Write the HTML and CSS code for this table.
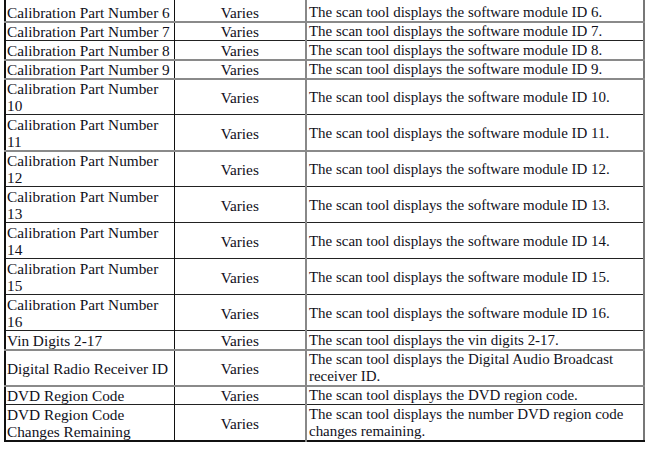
FILE: index.html
```html
<!DOCTYPE html>
<html>
<head>
<meta charset="utf-8">
<link rel="stylesheet" href="styles.css">
</head>
<body>
<table class="data">
<colgroup><col class="c1"><col class="c2"><col class="c3"></colgroup>
<tbody>
<tr class="first"><td>Calibration Part Number 6</td><td class="mid">Varies</td><td class="desc">The scan tool displays the software module ID 6.</td></tr>
<tr class="g"><td>Calibration Part Number 7</td><td class="mid">Varies</td><td class="desc">The scan tool displays the software module ID 7.</td></tr>
<tr><td>Calibration Part Number 8</td><td class="mid">Varies</td><td class="desc">The scan tool displays the software module ID 8.</td></tr>
<tr class="g"><td>Calibration Part Number 9</td><td class="mid">Varies</td><td class="desc">The scan tool displays the software module ID 9.</td></tr>
<tr class="g"><td>Calibration Part Number 10</td><td class="mid">Varies</td><td class="desc">The scan tool displays the software module ID 10.</td></tr>
<tr><td>Calibration Part Number 11</td><td class="mid">Varies</td><td class="desc">The scan tool displays the software module ID 11.</td></tr>
<tr class="g"><td>Calibration Part Number 12</td><td class="mid">Varies</td><td class="desc">The scan tool displays the software module ID 12.</td></tr>
<tr><td>Calibration Part Number 13</td><td class="mid">Varies</td><td class="desc">The scan tool displays the software module ID 13.</td></tr>
<tr><td>Calibration Part Number 14</td><td class="mid">Varies</td><td class="desc">The scan tool displays the software module ID 14.</td></tr>
<tr><td>Calibration Part Number 15</td><td class="mid">Varies</td><td class="desc">The scan tool displays the software module ID 15.</td></tr>
<tr><td>Calibration Part Number 16</td><td class="mid">Varies</td><td class="desc">The scan tool displays the software module ID 16.</td></tr>
<tr><td>Vin Digits 2-17</td><td class="mid">Varies</td><td class="desc">The scan tool displays the vin digits 2-17.</td></tr>
<tr class="g"><td>Digital Radio Receiver ID</td><td class="mid">Varies</td><td class="desc">The scan tool displays the Digital Audio Broadcast receiver ID.</td></tr>
<tr class="g"><td>DVD Region Code</td><td class="mid">Varies</td><td class="desc">The scan tool displays the DVD region code.</td></tr>
<tr><td>DVD Region Code Changes Remaining</td><td class="mid">Varies</td><td class="desc">The scan tool displays the number DVD region code changes remaining.</td></tr>
</tbody>
</table>
</body>
</html>
```
FILE: styles.css
```css
html, body {
  margin: 0;
  padding: 0;
  background: #fff;
}
body {
  font-family: "Liberation Serif", "Times New Roman", serif;
  font-size: 15.3px;
  color: #10101a;
}
.data {
  margin: 0 0 0 4px;
  width: 641px;
  table-layout: fixed;
  border-collapse: collapse;
  border-left: 2px solid #111;
  border-right: 2px solid #777;
  border-bottom: 2px solid #111;
}
.c1 { width: 169px; }
.c2 { width: 132px; }
.c3 { width: auto; }
.data td {
  padding: 1px 1px 0 1px;
  line-height: 17px;
  vertical-align: middle;
  border-top: 1px solid #222;
}
.data td.desc { font-size: 14.95px; padding-left: 2px; }
.data tr.first td { padding-top: 4px; border-top: none; }
.data tr.g td { border-top: 2px solid #8a8a8a; padding-top: 0; }
.data td:nth-child(1) { border-right: 1px solid #111; }
.data td:nth-child(2) { border-right: 2px solid #888; }
.data td.mid { text-align: center; }
```
